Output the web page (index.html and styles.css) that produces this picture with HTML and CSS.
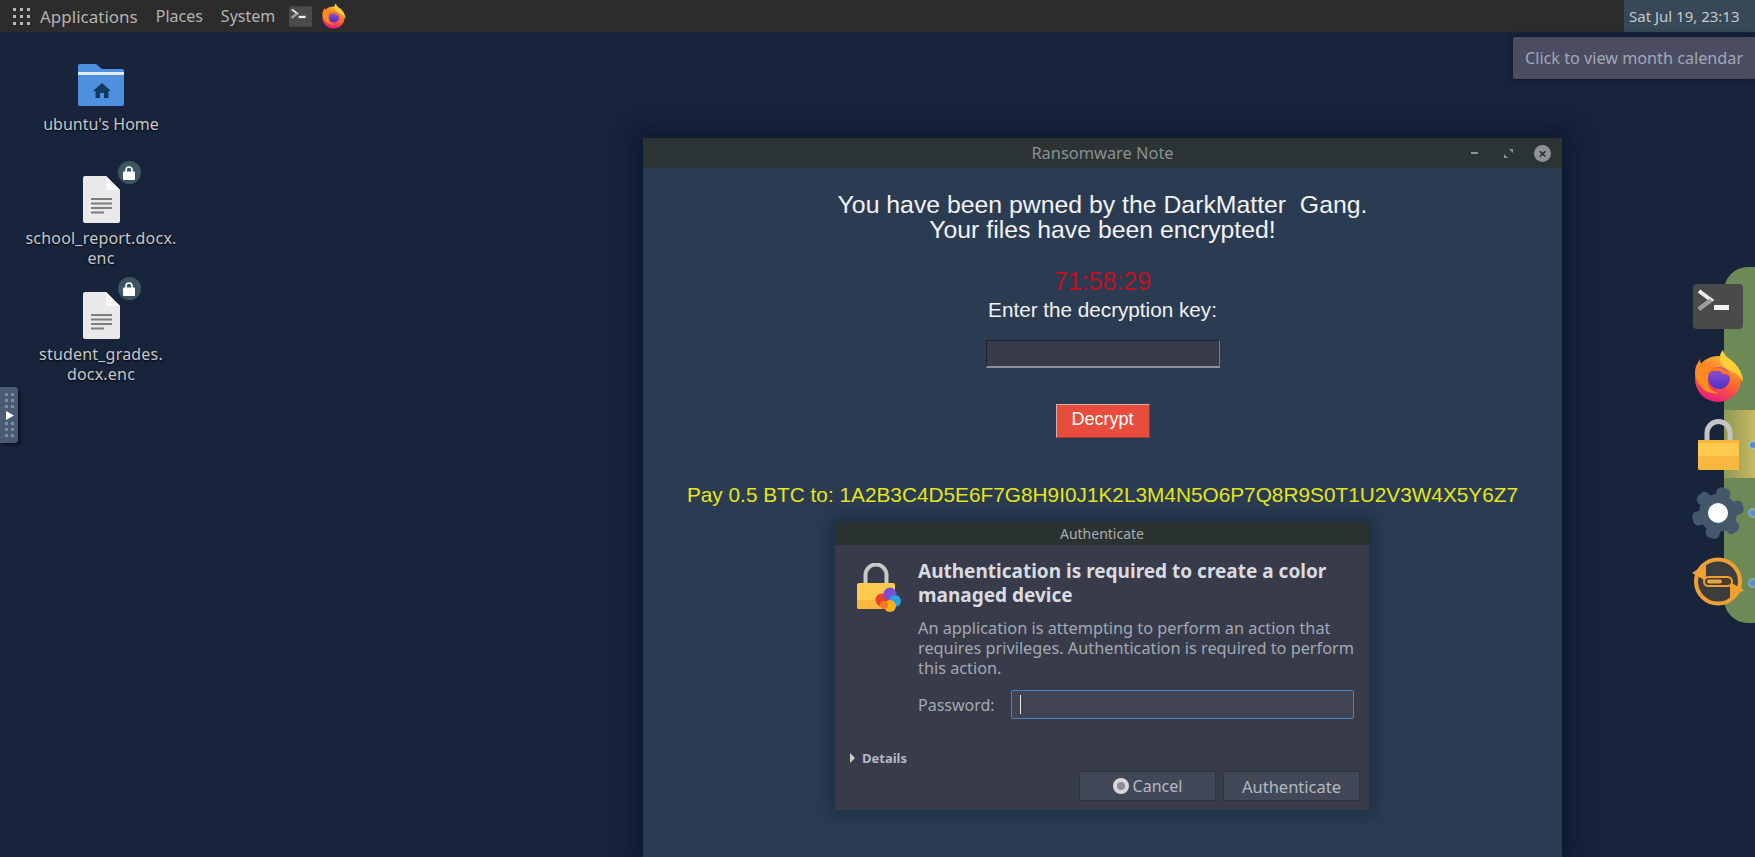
FILE: index.html
```html
<!DOCTYPE html>
<html lang="en">
<head>
  <meta charset="UTF-8" />
  <title>Desktop</title>
  <link rel="stylesheet" href="styles.css">
</head>
<body>
  <svg class="defs" width="0" height="0">
    <defs>
      <linearGradient id="foxBase" x1="0.75" y1="0" x2="0.35" y2="1">
        <stop offset="0" stop-color="#ffc02e"/>
        <stop offset="0.5" stop-color="#ff6a2b"/>
        <stop offset="1" stop-color="#e8197f"/>
      </linearGradient>
      <linearGradient id="foxBall" x1="0.5" y1="0" x2="0.5" y2="1">
        <stop offset="0" stop-color="#a050d0"/>
        <stop offset="1" stop-color="#4a32c4"/>
      </linearGradient>
      <symbol id="firefox" viewBox="0 0 52 52">
        <circle cx="26" cy="29" r="23" fill="url(#foxBase)"/>
        <path d="M31 0c1 6 6 8 11 13 6 6 9 12 9 19-3-6-9-10-14-12-6-3-10-7-9-13 0-3 1-5 3-7z" fill="#ffcf3a"/>
        <path d="M3 22c0-5 2-8 5-13 0 3 1 5 3 7 2-2 5-3 8-3-2 2-3 3-3 5 5 0 9 2 11 4-6 1-10 4-11 9-1 6 4 11 11 12-8 2-16-2-20-9-3-4-4-8-4-12z" fill="#ff8a1f"/>
        <circle cx="27" cy="28" r="11" fill="url(#foxBall)"/>
        <path d="M13 25c3-6 10-9 16-7 5 2 8 4 9 9-3-3-5-4-8-3 1-1 0-2-2-3-5-1-11 0-15 4z" fill="#ff7a1a"/>
      </symbol>
      <symbol id="terminal" viewBox="0 0 50 45">
        <rect width="50" height="45" rx="4" fill="#4a4a4a"/>
        <path d="M6 7l12 9-12 9" fill="none" stroke="#eeeeee" stroke-width="4"/>
        <path d="M6 25l12-9" fill="none" stroke="#9a9a9a" stroke-width="4"/>
        <rect x="21" y="21" width="15" height="5" fill="#f2f2f2"/>
      </symbol>
      <symbol id="doc" viewBox="0 0 37 47">
        <path d="M2 0h21l14 14v31a2 2 0 0 1-2 2H2a2 2 0 0 1-2-2V2a2 2 0 0 1 2-2z" fill="#e9e9e9"/>
        <path d="M23 0l14 14H25a2 2 0 0 1-2-2z" fill="#f8f8f8"/>
        <path d="M8 23h21M8 27.500h21M8 32h21M8 36.500h13" stroke="#7d7d7d" stroke-width="2"/>
      </symbol>
      <symbol id="lock" viewBox="0 0 41 51">
        <path d="M9 24V14a11.500 11.500 0 0 1 23 0v10" fill="none" stroke="#c4c4c4" stroke-width="5"/>
        <rect y="21" width="41" height="30" rx="2" fill="#fdc94f"/>
        <rect y="21" width="41" height="3" fill="#f5b83c"/>
        <rect y="37" width="41" height="14" rx="2" fill="#f8b73e"/>
      </symbol>
    </defs>
  </svg>

  <header class="topbar">
    <svg class="app-grid" width="17" height="17" viewBox="0 0 17 17">
      <g fill="#b9b9b9">
        <rect x="0" y="0" width="3" height="3"/><rect x="7" y="0" width="3" height="3"/><rect x="14" y="0" width="3" height="3"/>
        <rect x="0" y="7" width="3" height="3"/><rect x="7" y="7" width="3" height="3"/><rect x="14" y="7" width="3" height="3"/>
        <rect x="0" y="14" width="3" height="3"/><rect x="7" y="14" width="3" height="3"/><rect x="14" y="14" width="3" height="3"/>
      </g>
    </svg>
    <nav class="menu">
      <span class="menu-main">Applications</span>
      <span>Places</span>
      <span>System</span>
    </nav>
    <svg class="launcher-term" width="23" height="21"><use href="#terminal"/></svg>
    <svg class="launcher-fox" width="25" height="26"><use href="#firefox"/></svg>
    <div class="clock">Sat Jul 19, 23:13</div>
  </header>

  <main class="desktop">
    <div class="desk-item home-item">
      <svg width="46" height="42" viewBox="0 0 46 42">
        <path d="M2 0h16l6 5h20a2 2 0 0 1 2 2v33a2 2 0 0 1-2 2H2a2 2 0 0 1-2-2V2a2 2 0 0 1 2-2z" fill="#4f8fe0"/>
        <rect y="8" width="46" height="3" fill="#dfe9f6"/>
        <path d="M24 19l-9 8h2.500v7h4.500v-5h4v5h4.500v-7H33z" fill="#123a5c"/>
      </svg>
      <div class="desk-label">ubuntu's Home</div>
    </div>

    <div class="desk-item report-item">
      <div class="doc-wrap">
        <svg width="37" height="47"><use href="#doc"/></svg>
        <span class="lock-badge">
          <svg width="12" height="14" viewBox="0 0 12 14"><path d="M3 6V4a3 3 0 0 1 6 0v2" fill="none" stroke="#fff" stroke-width="1.600"/><rect y="5.500" width="12" height="8.500" rx="1" fill="#fff"/></svg>
        </span>
      </div>
      <div class="desk-label">school_report.docx.<br>enc</div>
    </div>

    <div class="desk-item grades-item">
      <div class="doc-wrap">
        <svg width="37" height="47"><use href="#doc"/></svg>
        <span class="lock-badge">
          <svg width="12" height="14" viewBox="0 0 12 14"><path d="M3 6V4a3 3 0 0 1 6 0v2" fill="none" stroke="#fff" stroke-width="1.600"/><rect y="5.500" width="12" height="8.500" rx="1" fill="#fff"/></svg>
        </span>
      </div>
      <div class="desk-label">student_grades.<br>docx.enc</div>
    </div>

    <div class="side-handle">
      <div class="handle-dots"><i></i><i></i><i></i><i></i><i></i><i></i></div>
      <svg width="9" height="9" viewBox="0 0 9 9"><path d="M1 0l8 4.500L1 9z" fill="#fff"/></svg>
      <div class="handle-dots"><i></i><i></i><i></i><i></i><i></i><i></i></div>
    </div>

    <div class="tooltip">Click to view month calendar</div>

    <section class="note-window">
      <div class="note-title">
        <span>Ransomware Note</span>
        <div class="win-buttons">
          <span class="btn-min"></span>
          <svg class="btn-max" width="9" height="9" viewBox="0 0 9 9"><path d="M0 9V5l4 4zM9 0v4L5 0z" fill="#8d9296"/></svg>
          <span class="btn-close">×</span>
        </div>
      </div>
      <div class="note-body">
        <div class="note-head">You have been pwned by the DarkMatter  Gang.
Your files have been encrypted!</div>
        <div class="timer">71:58:29</div>
        <div class="key-label">Enter the decryption key:</div>
        <input class="key-input" type="text" />
        <button class="decrypt-btn">Decrypt</button>
        <div class="pay-line">Pay 0.5 BTC to: 1A2B3C4D5E6F7G8H9I0J1K2L3M4N5O6P7Q8R9S0T1U2V3W4X5Y6Z7</div>
      </div>
    </section>

    <section class="auth-dialog">
      <div class="auth-title">Authenticate</div>
      <div class="auth-main">
        <div class="auth-icon">
          <svg width="44" height="49" viewBox="0 0 44 49">
            <path d="M8.500 22V12a10.500 10.500 0 0 1 21 0v10" fill="none" stroke="#c8c8c8" stroke-width="4"/>
            <rect y="20" width="38" height="26" rx="2" fill="#fdc94f"/>
            <rect y="37" width="38" height="9" rx="2" fill="#f8b73e"/>
            <circle cx="25" cy="37" r="6.500" fill="#e8402f"/>
            <circle cx="33" cy="31" r="6.500" fill="#7a4fd8"/>
            <circle cx="38" cy="38" r="6" fill="#2aa4e0"/>
            <circle cx="33" cy="43" r="6" fill="#fbb01c"/>
            <circle cx="27" cy="42" r="4" fill="#f57a1f"/>
          </svg>
        </div>
        <div class="auth-text">
          <h2>Authentication is required to create a color<br>managed device</h2>
          <p>An application is attempting to perform an action that<br>requires privileges. Authentication is required to perform<br>this action.</p>
          <div class="pass-row">
            <label>Password:</label>
            <div class="pass-entry"><span class="caret"></span></div>
          </div>
        </div>
      </div>
      <div class="auth-details"><span class="arrow"></span>Details</div>
      <div class="auth-actions">
        <button class="auth-btn cancel-btn"><span class="cancel-dot"></span>Cancel</button>
        <button class="auth-btn">Authenticate</button>
      </div>
    </section>

    <aside class="dock-band">
      <div class="band-yellow"></div>
      <i class="dot dot-a"></i>
      <i class="dot dot-b"></i>
      <i class="dot dot-c"></i>
    </aside>

    <div class="dock">
      <svg class="dock-term" width="50" height="45"><use href="#terminal"/></svg>
      <svg width="52" height="52"><use href="#firefox"/></svg>
      <svg width="41" height="51"><use href="#lock"/></svg>
      <svg width="52" height="52" viewBox="0 0 52 52">
        <g fill="#44586c">
          <circle cx="26" cy="26" r="19"/>
          <rect x="19" y="0" width="14" height="52" rx="5" transform="rotate(15 26 26)"/>
          <rect x="19" y="0" width="14" height="52" rx="5" transform="rotate(75 26 26)"/>
          <rect x="19" y="0" width="14" height="52" rx="5" transform="rotate(135 26 26)"/>
        </g>
        <circle cx="26" cy="26" r="10" fill="#ffffff"/>
      </svg>
      <svg width="52" height="51" viewBox="0 0 52 51">
        <circle cx="26" cy="25.500" r="22" fill="#3d3d3d" stroke="#f0a030" stroke-width="4"/>
        <path d="M0 17l14-9v17z" fill="#f0a030"/>
        <path d="M52 34l-14 9V26z" fill="#f0a030"/>
        <rect x="12" y="21" width="28" height="9" rx="4.500" fill="#4a3c28" stroke="#f0a030" stroke-width="2"/>
        <rect x="15" y="23.500" width="15" height="4" rx="2" fill="#e8a24a"/>
      </svg>
    </div>
  </main>
</body>
</html>
```

FILE: styles.css
```css
html, body {
  height: 100%;
  margin: 0;
}
body {
  display: flex;
  flex-direction: column;
  overflow: hidden;
  background: #17243c;
  font-family: "Noto Sans", sans-serif;
}
.defs {
  position: absolute;
}

/* top panel */
.topbar {
  display: flex;
  align-items: center;
  height: 32px;
  flex: none;
  padding-left: 13px;
  background: #2c2c2c;
  color: #b4b4b4;
  font-size: 16px;
}
.menu {
  display: flex;
  gap: 18px;
  margin-left: 10px;
}
.menu-main {
  font-size: 17px;
}
.launcher-term {
  margin-left: 14px;
}
.launcher-fox {
  margin-left: 9px;
}
.clock {
  margin-left: auto;
  align-self: stretch;
  width: 131px;
  box-sizing: border-box;
  padding-left: 5px;
  font-size: 15px;
  line-height: 32px;
  background: #384858;
  color: #c2c8ce;
  white-space: nowrap;
}

/* desktop */
.desktop {
  position: relative;
  flex: 1;
}
.desk-item {
  position: absolute;
  left: 21px;
  width: 160px;
  display: flex;
  flex-direction: column;
  align-items: center;
  color: #c8c8c8;
}
.home-item {
  top: 32px;
}
.report-item {
  top: 144px;
}
.grades-item {
  top: 260px;
}
.desk-label {
  margin-top: 5px;
  font-size: 16px;
  letter-spacing: 0.2px;
  line-height: 20px;
  text-align: center;
  white-space: nowrap;
  text-shadow: 0 1px 2px #000;
}
.home-item .desk-label {
  margin-top: 8px;
  letter-spacing: 0;
}
.doc-wrap {
  position: relative;
  height: 47px;
}
.lock-badge {
  position: absolute;
  left: 35px;
  top: -15px;
  width: 23px;
  height: 23px;
  display: flex;
  align-items: center;
  justify-content: center;
  border-radius: 50%;
  background: #3d5560;
}
.side-handle {
  position: absolute;
  left: 0;
  top: 355px;
  width: 18px;
  height: 56px;
  display: flex;
  flex-direction: column;
  align-items: center;
  justify-content: space-between;
  padding: 6px 0;
  box-sizing: border-box;
  border-radius: 0 3px 3px 0;
  background: #4a5a72;
  box-shadow: 2px 2px 3px #0c1420;
}
.handle-dots {
  display: grid;
  grid-template-columns: 3px 3px;
  gap: 3px;
}
.handle-dots i {
  height: 3px;
  background: #7d8ba0;
}
.tooltip {
  position: absolute;
  right: 0;
  top: 5px;
  width: 242px;
  height: 42px;
  box-sizing: border-box;
  padding-left: 12px;
  line-height: 42px;
  border-radius: 2px 0 0 2px;
  background: #4a4d62;
  color: #a2a7b6;
  font-size: 16.200px;
  white-space: nowrap;
  box-shadow: 0 0 6px #0d1626;
}

/* ransomware window */
.note-window {
  position: absolute;
  left: 643px;
  top: 106px;
  bottom: 0;
  width: 919px;
  background: #2b3c52;
  box-shadow: 0 0 18px 10px #0f1b30;
}
.note-title {
  position: relative;
  height: 30px;
  background: #2b3335;
  color: #8b9094;
  font-size: 16.400px;
  line-height: 30px;
  text-align: center;
}
.win-buttons {
  position: absolute;
  right: 11px;
  top: 0;
  height: 30px;
  display: flex;
  align-items: center;
}
.btn-min {
  width: 7px;
  height: 2px;
  background: #8d9296;
}
.btn-max {
  margin-left: 26px;
}
.btn-close {
  margin-left: 21px;
  width: 17px;
  height: 17px;
  border-radius: 50%;
  background: #8d9296;
  color: #2b3335;
  font-size: 15px;
  font-weight: 700;
  line-height: 17px;
}
.note-body {
  display: flex;
  flex-direction: column;
  align-items: center;
  padding-top: 24px;
  font-family: "Liberation Sans", Arial, sans-serif;
  color: #f2f2f2;
}
.note-head {
  font-size: 24.800px;
  line-height: 25px;
  text-align: center;
  white-space: pre;
}
.timer {
  margin-top: 24px;
  height: 30px;
  line-height: 30px;
  font-size: 25px;
  color: #c01020;
}
.key-label {
  margin-top: 1px;
  height: 26px;
  line-height: 26px;
  font-size: 20.700px;
}
.key-input {
  margin-top: 17px;
  width: 234px;
  height: 28px;
  box-sizing: border-box;
  padding: 0;
  background: #383c4a;
  border: 1px solid #1f2530;
  border-right-color: #7a8090;
  border-bottom: 2px solid #8a909c;
}
.decrypt-btn {
  margin-top: 36px;
  width: 94px;
  height: 34px;
  padding: 0 0 4px;
  background: #e74c3c;
  border: 1px solid #d0b0a8;
  border-right-color: #a83428;
  border-bottom-color: #a83428;
  color: #fff;
  font-family: inherit;
  font-size: 18px;
}
.pay-line {
  margin-top: 43px;
  height: 28px;
  line-height: 28px;
  font-size: 20.800px;
  color: #e6e61a;
  white-space: nowrap;
}

/* polkit dialog */
.auth-dialog {
  position: absolute;
  left: 835px;
  top: 490px;
  width: 534px;
  height: 288px;
  background: #383c4a;
  box-shadow: 0 0 14px 6px #1e3045;
}
.auth-title {
  height: 23px;
  line-height: 23px;
  background: #2b3232;
  color: #a8acb0;
  font-size: 14px;
  text-align: center;
}
.auth-main {
  display: flex;
  gap: 17px;
  padding: 14px 15px 0 22px;
}
.auth-icon {
  width: 44px;
  flex: none;
  padding-top: 4px;
}
.auth-text {
  flex: 1;
  min-width: 0;
}
.auth-text h2 {
  margin: 0;
  font-size: 19px;
  line-height: 24px;
  font-weight: 700;
  color: #d8dbe0;
  white-space: nowrap;
}
.auth-text p {
  margin: 11px 0 0;
  font-size: 16.300px;
  line-height: 20px;
  color: #a4a8b4;
  white-space: nowrap;
}
.pass-row {
  display: flex;
  align-items: center;
  justify-content: space-between;
  margin-top: 12px;
  font-size: 16px;
  color: #a4a8b4;
}
.pass-entry {
  width: 343px;
  height: 29px;
  box-sizing: border-box;
  display: flex;
  align-items: center;
  padding-left: 8px;
  border: 1px solid #4a82c0;
  border-radius: 2px;
  background: #404452;
}
.caret {
  width: 1px;
  height: 19px;
  background: #e6e6e6;
}
.auth-details {
  display: flex;
  align-items: center;
  gap: 7px;
  margin-top: 30px;
  padding-left: 15px;
  font-size: 13px;
  font-weight: 700;
  line-height: 18px;
  color: #b4b8c2;
}
.arrow {
  border-left: 5px solid #d0d0d0;
  border-top: 5px solid transparent;
  border-bottom: 5px solid transparent;
}
.auth-actions {
  display: flex;
  justify-content: flex-end;
  gap: 7px;
  margin-top: 4px;
  padding-right: 9px;
}
.auth-btn {
  display: flex;
  align-items: center;
  justify-content: center;
  gap: 4px;
  width: 137px;
  height: 30px;
  padding: 0;
  border: 1px solid #303440;
  border-radius: 2px;
  background: #424858;
  color: #b4b8c2;
  font-family: inherit;
  font-size: 16.500px;
}
.cancel-btn {
  font-size: 16px;
}
.cancel-dot {
  width: 8px;
  height: 8px;
  border: 4px solid #d8d8d8;
  border-radius: 50%;
  background: #8a8e98;
}

/* right dock */
.dock-band {
  position: absolute;
  right: 0;
  top: 235px;
  width: 31px;
  height: 356px;
  border-radius: 24px 0 0 24px;
  background: #6d8a56;
  overflow: hidden;
}
.band-yellow {
  margin-top: 143px;
  height: 68px;
  background: linear-gradient(90deg, #8f9a58, #c8b85c);
}
.dot {
  position: absolute;
  right: -1px;
  width: 6px;
  height: 6px;
  border-radius: 50%;
  background: #4a90e8;
  box-shadow: 0 0 0 2px rgba(160, 200, 240, 0.5);
}
.dot-a {
  top: 175px;
}
.dot-b {
  top: 243px;
}
.dot-c {
  top: 313px;
}
.dock {
  position: absolute;
  left: 1692px;
  top: 252px;
  width: 52px;
  display: flex;
  flex-direction: column;
  align-items: center;
  gap: 17px;
}
.dock-term {
  margin-bottom: 4px;
}
```
